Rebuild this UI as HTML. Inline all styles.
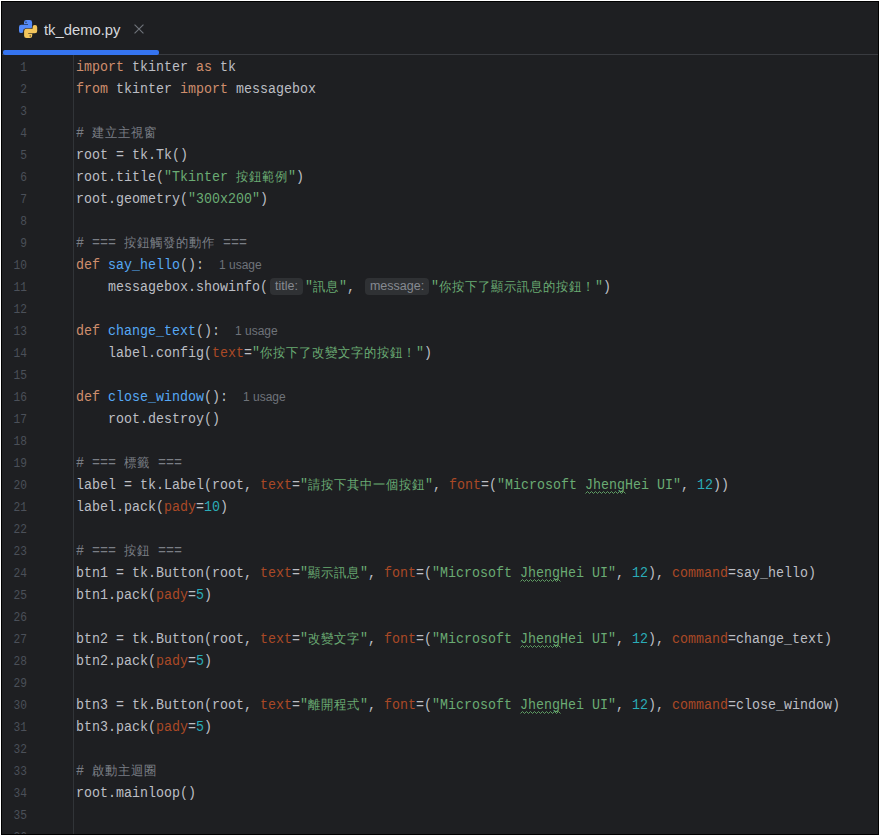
<!DOCTYPE html>
<html><head><meta charset="utf-8">
<style>
html,body{margin:0;padding:0;}
body{width:880px;height:836px;overflow:hidden;background:#fff;position:relative;}
#frame{position:absolute;left:1px;top:1px;width:878px;height:834px;background:#000;}
#ed{position:absolute;left:2px;top:2px;width:876px;height:832px;background:#1e1f22;overflow:hidden;}
.abs{position:absolute;}
#tabline{position:absolute;left:0;top:52px;width:876px;height:1px;background:#393b40;}
#bar{position:absolute;left:1px;top:48px;width:156px;height:5px;background:#3574f0;border-radius:2px;}
#tabtxt{position:absolute;left:42px;top:20px;font:14.8px "Liberation Sans",sans-serif;color:#d6d8dd;white-space:pre;}
#close{position:absolute;left:132px;top:22px;}
#gut{position:absolute;left:71px;top:53px;width:1px;height:800px;background:#313438;}
.ln{position:absolute;left:0;width:25px;text-align:right;height:22px;font:11.2px "Liberation Mono",monospace;line-height:22px;color:#4b5059;transform:scaleY(1.13);transform-origin:0 14px;}
.cl{position:absolute;left:74px;height:22px;font:13.333px "Liberation Mono",monospace;line-height:22px;color:#bcbec4;white-space:pre;transform:scaleY(1.15);transform-origin:0 14px;}
.cl span{line-height:0;}
.cl .cj{display:inline-block;font-size:12.4px;letter-spacing:1px;line-height:normal;transform:scaleY(0.92);transform-origin:0 12px;}
.k{color:#cf8e6d}.s{color:#6aab73}.n{color:#2aacb8}.f{color:#56a8f5}.c{color:#7a7e85}.p{color:#aa4926}.t{color:#bcbec4}
.w{color:#6aab73;}
.cl .u{display:inline-block;font:12px "Liberation Sans",sans-serif;line-height:normal;color:#6f737a;margin-left:15px;transform:scaleY(0.87);transform-origin:0 10.86px;}
.cl .h{display:inline-block;font:12.5px "Liberation Sans",sans-serif;line-height:17px;height:17px;color:#868a91;background:#2f3134;border-radius:4px;padding:0 5px;margin:0 2px 0 2px;vertical-align:1px;transform:scaleY(0.87);transform-origin:0 12.83px;}
</style></head><body>
<div id="frame"></div>
<div id="ed">
<svg class="abs" style="left:14px;top:15px" width="24" height="24" viewBox="0 0 24 24">
<path d="M10.4 3H13.7A2.4 2.4 0 0 1 16.1 5.4V9.9A2.4 2.4 0 0 1 13.7 12.3H7.6V14A2.1 2.1 0 0 1 5.5 16.1H5.2A2.2 2.2 0 0 1 3 13.9V10A2.2 2.2 0 0 1 5.2 7.8H8V5.4A2.4 2.4 0 0 1 10.4 3Z" fill="#548af7"/><rect x="8" y="7.2" width="4" height="0.6" fill="#1e1f22"/><circle cx="10" cy="5.2" r="0.65" fill="#1e1f22"/>
<g transform="rotate(180 12.1 12.05)"><path d="M10.4 3H13.7A2.4 2.4 0 0 1 16.1 5.4V9.9A2.4 2.4 0 0 1 13.7 12.3H7.6V14A2.1 2.1 0 0 1 5.5 16.1H5.2A2.2 2.2 0 0 1 3 13.9V10A2.2 2.2 0 0 1 5.2 7.8H8V5.4A2.4 2.4 0 0 1 10.4 3Z" fill="#f2c55c" stroke="#1e1f22" stroke-width="1.3" paint-order="stroke"/><rect x="8" y="7.2" width="4" height="0.6" fill="#1e1f22"/><circle cx="10" cy="5.2" r="0.65" fill="#1e1f22"/></g>
</svg>
<div id="tabtxt">tk_demo.py</div>
<svg id="close" width="11" height="11" viewBox="0 0 11 11"><path d="M0.55 0.55L9.45 9.45M9.45 0.55L0.55 9.45" stroke="#6f737a" stroke-width="1.15"/></svg>
<div id="tabline"></div>
<div id="bar"></div>
<div id="gut"></div>
<div class="ln" style="top:55px">1</div>
<div class="cl" style="top:55px"><span class="k">import</span><span class="t"> tkinter </span><span class="k">as</span><span class="t"> tk</span></div>
<div class="ln" style="top:77px">2</div>
<div class="cl" style="top:77px"><span class="k">from</span><span class="t"> tkinter </span><span class="k">import</span><span class="t"> messagebox</span></div>
<div class="ln" style="top:99px">3</div>
<div class="ln" style="top:121px">4</div>
<div class="cl" style="top:121px"><span class="c"># <span class="cj">建立主視窗</span></span></div>
<div class="ln" style="top:143px">5</div>
<div class="cl" style="top:143px"><span class="t">root = tk.Tk()</span></div>
<div class="ln" style="top:165px">6</div>
<div class="cl" style="top:165px"><span class="t">root.title(</span><span class="s">&quot;Tkinter <span class="cj">按鈕範例</span>&quot;</span><span class="t">)</span></div>
<div class="ln" style="top:187px">7</div>
<div class="cl" style="top:187px"><span class="t">root.geometry(</span><span class="s">&quot;300x200&quot;</span><span class="t">)</span></div>
<div class="ln" style="top:209px">8</div>
<div class="ln" style="top:231px">9</div>
<div class="cl" style="top:231px"><span class="c"># === <span class="cj">按鈕觸發的動作</span> ===</span></div>
<div class="ln" style="top:253px">10</div>
<div class="cl" style="top:253px"><span class="k">def</span><span class="t"> </span><span class="f">say_hello</span><span class="t">():</span><span class="u">1 usage</span></div>
<div class="ln" style="top:275px">11</div>
<div class="cl" style="top:275px"><span class="t">    messagebox.showinfo(</span><span class="h">title:</span><span class="s">&quot;<span class="cj">訊息</span>&quot;</span><span class="t">, </span><span class="h">message:</span><span class="s">&quot;<span class="cj">你按下了顯示訊息的按鈕！</span>&quot;</span><span class="t">)</span></div>
<div class="ln" style="top:297px">12</div>
<div class="ln" style="top:319px">13</div>
<div class="cl" style="top:319px"><span class="k">def</span><span class="t"> </span><span class="f">change_text</span><span class="t">():</span><span class="u">1 usage</span></div>
<div class="ln" style="top:341px">14</div>
<div class="cl" style="top:341px"><span class="t">    label.config(</span><span class="p">text</span><span class="t">=</span><span class="s">&quot;<span class="cj">你按下了改變文字的按鈕！</span>&quot;</span><span class="t">)</span></div>
<div class="ln" style="top:363px">15</div>
<div class="ln" style="top:385px">16</div>
<div class="cl" style="top:385px"><span class="k">def</span><span class="t"> </span><span class="f">close_window</span><span class="t">():</span><span class="u">1 usage</span></div>
<div class="ln" style="top:407px">17</div>
<div class="cl" style="top:407px"><span class="t">    root.destroy()</span></div>
<div class="ln" style="top:429px">18</div>
<div class="ln" style="top:451px">19</div>
<div class="cl" style="top:451px"><span class="c"># === <span class="cj">標籤</span> ===</span></div>
<div class="ln" style="top:473px">20</div>
<div class="cl" style="top:473px"><span class="t">label = tk.Label(root, </span><span class="p">text</span><span class="t">=</span><span class="s">&quot;<span class="cj">請按下其中一個按鈕</span>&quot;</span><span class="t">, </span><span class="p">font</span><span class="t">=(</span><span class="s">&quot;Microsoft </span><span class="w">Jheng</span><span class="s">Hei UI&quot;</span><span class="t">, </span><span class="n">12</span><span class="t">))</span></div>
<div class="ln" style="top:495px">21</div>
<div class="cl" style="top:495px"><span class="t">label.pack(</span><span class="p">pady</span><span class="t">=</span><span class="n">10</span><span class="t">)</span></div>
<div class="ln" style="top:517px">22</div>
<div class="ln" style="top:539px">23</div>
<div class="cl" style="top:539px"><span class="c"># === <span class="cj">按鈕</span> ===</span></div>
<div class="ln" style="top:561px">24</div>
<div class="cl" style="top:561px"><span class="t">btn1 = tk.Button(root, </span><span class="p">text</span><span class="t">=</span><span class="s">&quot;<span class="cj">顯示訊息</span>&quot;</span><span class="t">, </span><span class="p">font</span><span class="t">=(</span><span class="s">&quot;Microsoft </span><span class="w">Jheng</span><span class="s">Hei UI&quot;</span><span class="t">, </span><span class="n">12</span><span class="t">), </span><span class="p">command</span><span class="t">=say_hello)</span></div>
<div class="ln" style="top:583px">25</div>
<div class="cl" style="top:583px"><span class="t">btn1.pack(</span><span class="p">pady</span><span class="t">=</span><span class="n">5</span><span class="t">)</span></div>
<div class="ln" style="top:605px">26</div>
<div class="ln" style="top:627px">27</div>
<div class="cl" style="top:627px"><span class="t">btn2 = tk.Button(root, </span><span class="p">text</span><span class="t">=</span><span class="s">&quot;<span class="cj">改變文字</span>&quot;</span><span class="t">, </span><span class="p">font</span><span class="t">=(</span><span class="s">&quot;Microsoft </span><span class="w">Jheng</span><span class="s">Hei UI&quot;</span><span class="t">, </span><span class="n">12</span><span class="t">), </span><span class="p">command</span><span class="t">=change_text)</span></div>
<div class="ln" style="top:649px">28</div>
<div class="cl" style="top:649px"><span class="t">btn2.pack(</span><span class="p">pady</span><span class="t">=</span><span class="n">5</span><span class="t">)</span></div>
<div class="ln" style="top:671px">29</div>
<div class="ln" style="top:693px">30</div>
<div class="cl" style="top:693px"><span class="t">btn3 = tk.Button(root, </span><span class="p">text</span><span class="t">=</span><span class="s">&quot;<span class="cj">離開程式</span>&quot;</span><span class="t">, </span><span class="p">font</span><span class="t">=(</span><span class="s">&quot;Microsoft </span><span class="w">Jheng</span><span class="s">Hei UI&quot;</span><span class="t">, </span><span class="n">12</span><span class="t">), </span><span class="p">command</span><span class="t">=close_window)</span></div>
<div class="ln" style="top:715px">31</div>
<div class="cl" style="top:715px"><span class="t">btn3.pack(</span><span class="p">pady</span><span class="t">=</span><span class="n">5</span><span class="t">)</span></div>
<div class="ln" style="top:737px">32</div>
<div class="ln" style="top:759px">33</div>
<div class="cl" style="top:759px"><span class="c"># <span class="cj">啟動主迴圈</span></span></div>
<div class="ln" style="top:781px">34</div>
<div class="cl" style="top:781px"><span class="t">root.mainloop()</span></div>
<div class="ln" style="top:803px">35</div>
<div class="ln" style="top:825px">36</div>
<svg class="abs" style="left:-2px;top:-2px;overflow:visible" width="1" height="1"><polyline points="585.5,493.5 587.5,491.5 589.5,493.5 591.5,491.5 593.5,493.5 595.5,491.5 597.5,493.5 599.5,491.5 601.5,493.5 603.5,491.5 605.5,493.5 607.5,491.5 609.5,493.5 611.5,491.5 613.5,493.5 615.5,491.5 617.5,493.5 619.5,491.5 621.5,493.5 623.5,491.5 625.5,493.5" fill="none" stroke="#5f9e64" stroke-width="1"/></svg>
<svg class="abs" style="left:-2px;top:-2px;overflow:visible" width="1" height="1"><polyline points="520.5,581.5 522.5,579.5 524.5,581.5 526.5,579.5 528.5,581.5 530.5,579.5 532.5,581.5 534.5,579.5 536.5,581.5 538.5,579.5 540.5,581.5 542.5,579.5 544.5,581.5 546.5,579.5 548.5,581.5 550.5,579.5 552.5,581.5 554.5,579.5 556.5,581.5 558.5,579.5 560.5,581.5" fill="none" stroke="#5f9e64" stroke-width="1"/></svg>
<svg class="abs" style="left:-2px;top:-2px;overflow:visible" width="1" height="1"><polyline points="520.5,647.5 522.5,645.5 524.5,647.5 526.5,645.5 528.5,647.5 530.5,645.5 532.5,647.5 534.5,645.5 536.5,647.5 538.5,645.5 540.5,647.5 542.5,645.5 544.5,647.5 546.5,645.5 548.5,647.5 550.5,645.5 552.5,647.5 554.5,645.5 556.5,647.5 558.5,645.5 560.5,647.5" fill="none" stroke="#5f9e64" stroke-width="1"/></svg>
<svg class="abs" style="left:-2px;top:-2px;overflow:visible" width="1" height="1"><polyline points="520.5,713.5 522.5,711.5 524.5,713.5 526.5,711.5 528.5,713.5 530.5,711.5 532.5,713.5 534.5,711.5 536.5,713.5 538.5,711.5 540.5,713.5 542.5,711.5 544.5,713.5 546.5,711.5 548.5,713.5 550.5,711.5 552.5,713.5 554.5,711.5 556.5,713.5 558.5,711.5 560.5,713.5" fill="none" stroke="#5f9e64" stroke-width="1"/></svg>
</div>
</body></html>
